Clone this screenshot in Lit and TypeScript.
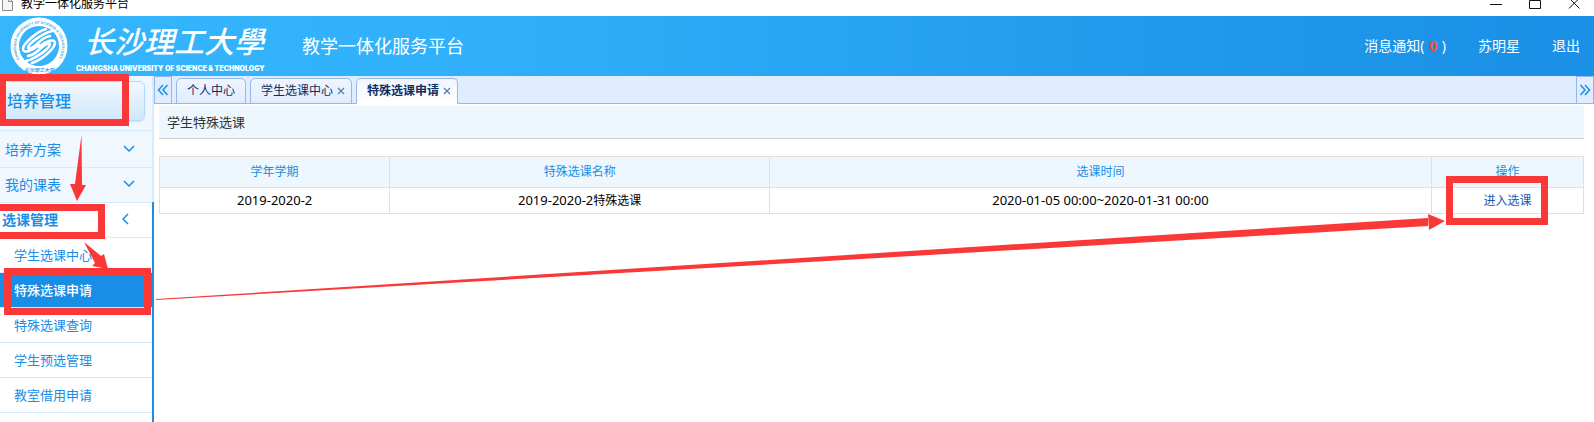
import { LitElement, html, css } from "lit";
import { customElement, state } from "lit/decorators.js";

interface Tab {
  name: string;
  closable: boolean;
}

@customElement("window-bar")
class WindowBar extends LitElement {
  static styles = css`
    :host {
      display: flex;
      align-items: flex-start;
      justify-content: space-between;
      height: 16px;
      overflow: hidden;
      background: #fff;
      color: #000;
      font-size: 12px;
    }
    .title {
      display: flex;
      align-items: flex-start;
      gap: 8px;
      padding-left: 2px;
      line-height: 8px;
    }
    .controls {
      display: flex;
      padding-right: 13px;
      gap: 26px;
    }
    button {
      display: block;
      border: 0;
      padding: 0;
      background: none;
      width: 13px;
      height: 10px;
    }
    svg {
      display: block;
    }
  `;

  render() {
    return html`
      <div class="title">
        <svg width="11" height="11" viewBox="0 0 11 11" fill="#f6f6f6" stroke="#8a8a8a">
          <path d="M.5 -3V10.5H10.5V1.500L7 -2z" />
          <path d="M6.500 -1V1.500H10.500" fill="none" />
        </svg>
        <span>教学一体化服务平台</span>
      </div>
      <div class="controls">
        <button aria-label="最小化">
          <svg width="13" height="10"><path d="M0 4.500H12" stroke="#111" /></svg>
        </button>
        <button aria-label="最大化">
          <svg width="13" height="10"><path d="M.5 .5H11.500V8.500H.5z" stroke="#111" fill="none" /></svg>
        </button>
        <button aria-label="关闭">
          <svg width="13" height="10"><path d="M1 -2L11.500 8.500M11.500 -2L1 8.500" stroke="#111" /></svg>
        </button>
      </div>
    `;
  }
}

@customElement("school-logo")
class SchoolLogo extends LitElement {
  static styles = css`
    :host {
      display: flex;
      align-items: center;
      gap: 8px;
      color: #fff;
    }
    .words {
      display: flex;
      flex-direction: column;
      gap: 2px;
    }
    .name {
      display: flex;
      justify-content: space-between;
      padding: 0 6px 0 8px;
      font-size: 30px;
      font-weight: 500;
      font-style: italic;
      line-height: 43px;
    }
    .latin {
      font: 900 7px/8px "Inter", "Liberation Sans", sans-serif;
      white-space: nowrap;
    }
    svg {
      display: block;
    }
  `;

  render() {
    return html`
      <svg width="58" height="58" viewBox="0 0 58 58" fill="none">
        <defs>
          <path id="ring" d="M9.500 42A23 23 0 1 1 48.500 42" />
        </defs>
        <circle cx="29" cy="29" r="28.500" fill="#fff" />
        <circle cx="29" cy="29" r="20" fill="#35b3fb" />
        <text fill="#35a8ee" font-family="Liberation Sans, sans-serif" font-size="3.600" font-weight="700">
          <textPath href="#ring">CHANGSHA UNIVERSITY OF SCIENCE &amp; TECHNOLOGY</textPath>
        </text>
        <text x="29" y="55" text-anchor="middle" fill="#35a8ee" font-size="5" font-style="italic" font-weight="700">长沙理工大学</text>
        <g stroke="#fff" stroke-width="2.600" stroke-linecap="round" stroke-linejoin="round">
          <path d="M36 12C26 15 13 27 13 32C13 37 22 34 29 28" />
          <path d="M42 14C31 17 18 27 18 31C19 33 24 30 28 26C31 23 35 20 40 19" />
          <path d="M22 46C32 43 45 31 45 26C45 21 36 24 29 30" />
          <path d="M16 44C27 41 40 31 40 27C39 25 34 28 30 32C27 35 23 38 18 39" />
        </g>
      </svg>
      <div class="words">
        <div class="name">
          <span>长</span><span>沙</span><span>理</span><span>工</span><span>大</span><span>學</span>
        </div>
        <div class="latin">CHANGSHA UNIVERSITY OF SCIENCE &amp; TECHNOLOGY</div>
      </div>
    `;
  }
}

@customElement("page-header")
class PageHeader extends LitElement {
  static styles = css`
    :host {
      display: flex;
      align-items: center;
      height: 60px;
      padding: 0 14px 0 10px;
      background: linear-gradient(90deg, #36b6fd 0%, #30b0fa 30%, #1f99ea 75%, #1a90e6 100%);
      color: #fff;
    }
    h1 {
      margin: 0 0 0 32px;
      font-size: 18px;
      font-weight: 400;
      line-height: 24px;
    }
    nav {
      display: flex;
      gap: 32px;
      margin-left: auto;
      font-size: 14px;
      line-height: 20px;
    }
    a {
      color: #fff;
      text-decoration: none;
      white-space: pre;
    }
    b {
      padding: 0 1px;
      color: #ff4a2c;
    }
  `;

  render() {
    return html`
      <school-logo></school-logo>
      <h1>教学一体化服务平台</h1>
      <nav>
        <a href="#messages">消息通知( <b>0</b> )</a>
        <a href="#profile">苏明星</a>
        <a href="#logout">退出</a>
      </nav>
    `;
  }
}

@customElement("side-menu")
class SideMenu extends LitElement {
  static styles = css`
    :host {
      display: flex;
      flex-direction: column;
      background: #fff;
    }
    .head {
      padding: 5px 7px 9px 0;
      background: #f0f7fe;
      border-right: 2px solid #d6ecfd;
    }
    .head button {
      display: block;
      width: 100%;
      height: 40px;
      padding: 0 0 2px 6px;
      border: 1px solid #b4dafa;
      border-radius: 6px;
      background: linear-gradient(#f2f8fe, #d0e7fb);
      box-shadow: 0 1px 2px #c8e2f6;
      color: #188ee6;
      font: inherit;
      font-size: 16px;
      font-weight: 500;
      text-align: left;
    }
    ul {
      margin: 0;
      padding: 0;
      list-style: none;
    }
    a {
      display: flex;
      align-items: center;
      justify-content: space-between;
      box-sizing: border-box;
      height: 35px;
      padding-bottom: 2px;
      border-top: 1px solid #d6ecfd;
      color: #188ee6;
      text-decoration: none;
      white-space: nowrap;
    }
    .group {
      padding: 0 16px 2px 5px;
      background: #f0f7fe;
      border-right: 2px solid #d6ecfd;
      font-size: 14px;
    }
    .first {
      height: 37px;
      padding-top: 2px;
    }
    .open {
      padding-left: 2px;
      background: #fff;
      border-right-color: #188ee6;
      font-weight: 700;
    }
    .menu {
      display: flex;
      flex: 1;
      flex-direction: column;
    }
    .menu .fill {
      flex: 1;
      border-right: 2px solid #188ee6;
    }
    .fill .open {
      border-right: 0;
      padding-right: 18px;
    }
    .sub a {
      padding-left: 14px;
      font-size: 13px;
    }
    .sub li:last-child {
      border-bottom: 1px solid #d6ecfd;
    }
    .sub .current {
      background: #188ee6;
      color: #fff;
      font-weight: 500;
    }
    svg {
      display: block;
      fill: none;
      stroke: #188ee6;
      stroke-width: 1.5;
    }
  `;

  private down = html`<svg width="14" height="14"><path d="M2 4L7 9L12 4" /></svg>`;
  private left = html`<svg width="14" height="14"><path d="M8 2L3 7L8 12" /></svg>`;
  private items = ["学生选课中心", "特殊选课申请", "特殊选课查询", "学生预选管理", "教室借用申请"];

  render() {
    return html`
      <div class="head"><button>培养管理</button></div>
      <ul class="menu">
        <li><a class="group first" href="#plan">培养方案${this.down}</a></li>
        <li><a class="group" href="#timetable">我的课表${this.down}</a></li>
        <li class="fill">
          <a class="group open" href="#selection">选课管理${this.left}</a>
          <ul class="sub">
            ${this.items.map(
              (t, i) => html`<li><a class=${i === 1 ? "current" : ""} href="#item${i}">${t}</a></li>`
            )}
          </ul>
        </li>
      </ul>
    `;
  }
}

@customElement("tab-strip")
class TabStrip extends LitElement {
  @state() private active = 2;

  private tabs: Tab[] = [
    { name: "个人中心", closable: false },
    { name: "学生选课中心", closable: true },
    { name: "特殊选课申请", closable: true },
  ];

  static styles = css`
    :host {
      display: flex;
      height: 28px;
      background: #e0ecff;
      box-shadow: inset 0 -1px #95b8e7;
    }
    button {
      margin: 0;
      padding: 0;
      border: 0;
      background: none;
      color: inherit;
      font: inherit;
    }
    .scroll {
      display: grid;
      place-items: center;
      box-sizing: border-box;
      width: 18px;
      border: 1px solid #95b8e7;
      color: #188ee6;
    }
    .tabs {
      display: flex;
      flex: 1;
      gap: 4px;
      padding: 2px 0 0 4px;
    }
    .tab {
      display: flex;
      align-items: center;
      gap: 4px;
      box-sizing: border-box;
      height: 26px;
      padding: 0 10px;
      border: 1px solid #95b8e7;
      border-radius: 5px 5px 0 0;
      background: linear-gradient(#eff5ff, #e0ecff);
      color: #0e2d5f;
      font-size: 12px;
      line-height: 20px;
    }
    .closable {
      padding-right: 6px;
    }
    .active {
      background: linear-gradient(#eff5ff, #fff);
      border-bottom-color: #fff;
      font-weight: 700;
    }
    svg {
      display: block;
      fill: none;
      stroke: currentColor;
    }
    .close {
      color: #5a7fae;
    }
  `;

  render() {
    return html`
      <button class="scroll" aria-label="向左">
        <svg width="12" height="12" stroke-width="1.500"><path d="M6 1L1.500 6L6 11M10.500 1L6 6L10.500 11" /></svg>
      </button>
      <div class="tabs">
        ${this.tabs.map(
          (t, i) => html`
            <div class="tab ${t.closable ? "closable" : ""} ${i === this.active ? "active" : ""}">
              <button @click=${() => (this.active = i)}>${t.name}</button>
              ${t.closable
                ? html`<button class="close" aria-label="关闭">
                    <svg width="8" height="8" stroke-width="1.300"><path d="M1 1L7 7M7 1L1 7" /></svg>
                  </button>`
                : ""}
            </div>
          `
        )}
      </div>
      <button class="scroll" aria-label="向右">
        <svg width="12" height="12" stroke-width="1.500"><path d="M1.500 1L6 6L1.500 11M6 1L10.500 6L6 11" /></svg>
      </button>
    `;
  }
}

@customElement("course-table")
class CourseTable extends LitElement {
  static styles = css`
    :host {
      display: block;
      padding: 2px 10px 0 5px;
    }
    h2 {
      margin: 0 0 17px;
      padding: 0 8px;
      border-bottom: 1px solid #ccc;
      background: #eef6fe;
      color: #333;
      font-size: 13px;
      font-weight: 400;
      line-height: 32px;
    }
    table {
      width: 100%;
      border-collapse: collapse;
      table-layout: fixed;
      font-size: 12px;
      text-align: center;
      color: #000;
    }
    th,
    td {
      padding: 0;
      border: 1px solid #e0e0e0;
      line-height: 20px;
    }
    th {
      height: 30px;
      background: #eef6fe;
      color: #188ee6;
      font-weight: 400;
    }
    td {
      height: 25px;
    }
    .term {
      width: 16.1%;
    }
    .title {
      width: 26.6%;
    }
    .time {
      width: 46.4%;
    }
    .num {
      font-size: 13px;
    }
    a {
      color: #1b57b5;
      text-decoration: none;
    }
  `;

  render() {
    return html`
      <h2>学生特殊选课</h2>
      <table>
        <thead>
          <tr>
            <th class="term">学年学期</th>
            <th class="title">特殊选课名称</th>
            <th class="time">选课时间</th>
            <th>操作</th>
          </tr>
        </thead>
        <tbody>
          <tr>
            <td><span class="num">2019-2020-2</span></td>
            <td><span class="num">2019-2020-2</span>特殊选课</td>
            <td><span class="num">2020-01-05 00:00~2020-01-31 00:00</span></td>
            <td><a href="#enter">进入选课</a></td>
          </tr>
        </tbody>
      </table>
    `;
  }
}

@customElement("guide-marks")
class GuideMarks extends LitElement {
  static styles = css`
    :host {
      position: absolute;
      inset: 0;
      pointer-events: none;
    }
    svg {
      position: absolute;
      fill: #fb3838;
    }
    .box {
      position: absolute;
      box-sizing: border-box;
      border: 7px solid #fb3838;
    }
    .module {
      left: -1px;
      top: 74px;
      width: 130px;
      height: 52px;
    }
    .menu {
      left: -7px;
      top: 204px;
      width: 112px;
      height: 35px;
    }
    .entry {
      left: 4px;
      top: 268px;
      width: 147px;
      height: 47px;
    }
    .action {
      right: 46px;
      top: 176px;
      width: 102px;
      height: 49px;
    }
    .steps {
      left: 0;
      top: 0;
    }
    .shaft {
      left: 156px;
      top: 214px;
      width: calc(100% - 322px);
      height: 88px;
    }
    .tip {
      right: 149px;
      top: 214px;
    }
  `;

  render() {
    return html`
      <div class="box module"></div>
      <div class="box menu"></div>
      <div class="box entry"></div>
      <div class="box action"></div>
      <svg class="steps" width="152" height="300">
        <path d="M81.500 135L82 185H86L77 201L70 184H75z" />
        <path d="M84 242L101 256L104 254L108 269L92 266L95 263z" />
      </svg>
      <svg class="shaft" viewBox="0 0 1272 88" preserveAspectRatio="none">
        <path d="M0 85L1272 4V12L0 86z" />
      </svg>
      <svg class="tip" width="17" height="16"><path d="M0 0L17 7L1 16z" /></svg>
    `;
  }
}

@customElement("app-root")
class AppRoot extends LitElement {
  static styles = css`
    :host {
      display: flex;
      flex-direction: column;
      position: relative;
      min-height: 100vh;
      overflow: hidden;
      background: #fff;
      font-family: "Noto Sans", "Noto Sans CJK SC", sans-serif;
    }
    .body {
      display: grid;
      grid-template-columns: 154px minmax(0, 1fr);
      flex: 1;
    }
  `;

  render() {
    return html`
      <window-bar></window-bar>
      <page-header></page-header>
      <div class="body">
        <side-menu></side-menu>
        <main>
          <tab-strip></tab-strip>
          <course-table></course-table>
        </main>
      </div>
      <guide-marks></guide-marks>
    `;
  }
}
